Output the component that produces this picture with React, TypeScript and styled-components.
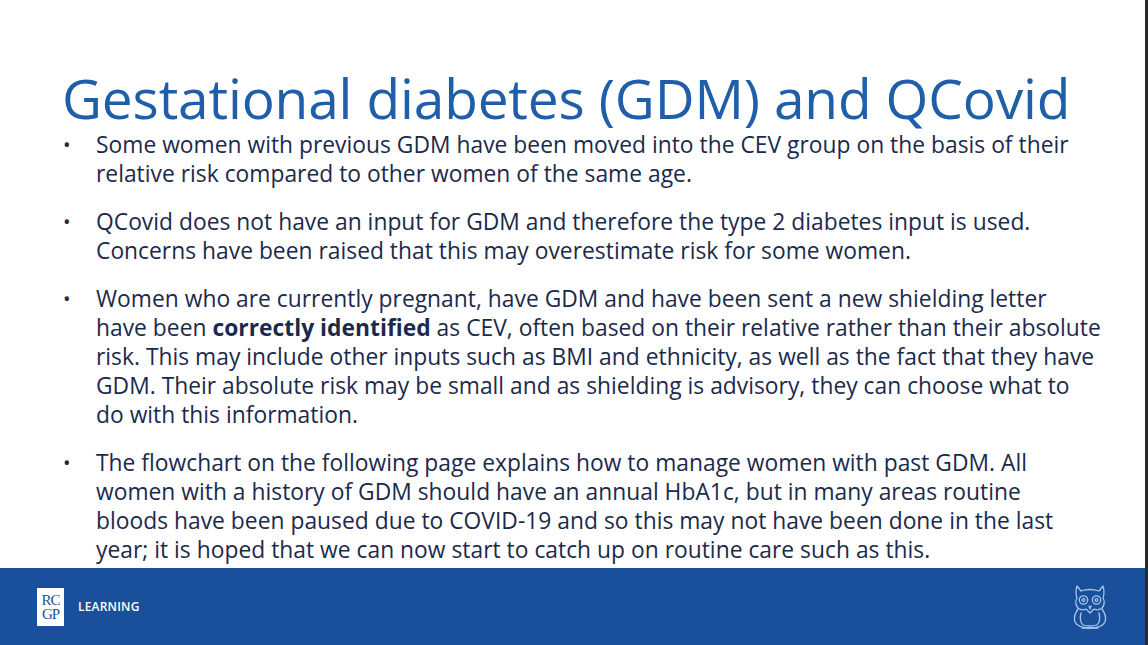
import styled, { createGlobalStyle } from "styled-components";

const GlobalStyle = createGlobalStyle`
  html, body {
    margin: 0;
    padding: 0;
    background: #ffffff;
  }
  body {
    font-family: "Open Sans", "Noto Sans", sans-serif;
  }
`;

const Slide = styled.div`
  width: 1148px;
  height: 645px;
  box-sizing: border-box;
  border-right: 3px solid #2a2a2a;
  display: flex;
  flex-direction: column;
  overflow: hidden;
  background: #ffffff;
`;

const Content = styled.main`
  flex: 1;
  padding: 70px 0 0 62px;
`;

const Title = styled.h1`
  margin: 0;
  font-family: "Open Sans", sans-serif;
  font-weight: 400;
  font-size: 55px;
  line-height: 56px;
  color: #1f5ea8;
  letter-spacing: -0.15px;
  white-space: nowrap;
`;

const BulletList = styled.ul`
  list-style: none;
  margin: 4px 0 0;
  padding: 0;
  display: flex;
  flex-direction: column;
  gap: 19px;
`;

const Bullet = styled.li`
  display: flex;
  color: #1b2a4b;
  font-size: 22.8px;
  line-height: 29px;
  letter-spacing: 0.02px;
  white-space: nowrap;

  &::before {
    content: "•";
    width: 33px;
    flex-shrink: 0;
    padding-left: 1px;
    font-size: 20px;
  }
`;

const Strong = styled.b`
  font-weight: 700;
`;

const Footer = styled.footer`
  height: 77px;
  background: #1a509b;
  display: flex;
  align-items: center;
  justify-content: space-between;
  padding: 0 37px 0 37px;
`;

const Brand = styled.div`
  display: flex;
  align-items: center;
  gap: 14px;
`;

const LogoBox = styled.div`
  width: 27px;
  height: 38px;
  background: #ffffff;
  display: flex;
  flex-direction: column;
  align-items: center;
  justify-content: center;
  font-family: "Liberation Serif", "DejaVu Serif", serif;
  font-size: 15px;
  line-height: 14px;
  color: #1a509b;
  letter-spacing: -1px;
`;

const BrandText = styled.span`
  color: #ffffff;
  font-size: 12px;
  font-weight: 600;
  letter-spacing: 0.2px;
`;

const Owl = () => (
  <svg width="36" height="48" viewBox="0 0 36 48" fill="none" stroke="#a9c4ea" strokeWidth="1.3" strokeLinejoin="round" strokeLinecap="round">
    <path d="M5 3 L9 8 Q18 5 27 8 L31 3 Q33 10 31 15 Q34 20 30 25 Q26 28 22 26 L18 30 L14 26 Q10 28 6 25 Q2 20 5 15 Q3 10 5 3 Z" />
    <circle cx="11.5" cy="17" r="4.2" />
    <circle cx="24.5" cy="17" r="4.2" />
    <circle cx="11.5" cy="17" r="1.4" />
    <circle cx="24.5" cy="17" r="1.4" />
    <path d="M17 23 L18 26 L19 23" />
    <path d="M6 26 Q1 33 3 39 Q6 45 18 45 Q30 45 33 39 Q35 33 30 26" />
    <path d="M9 30 Q7 38 11 42 Q18 44 25 42 Q29 38 27 30" />
    <path d="M10 45 L26 45" />
  </svg>
);

function App() {
  return (
    <>
      <GlobalStyle />
      <Slide>
        <Content>
          <Title>Gestational diabetes (GDM) and QCovid</Title>
          <BulletList>
            <Bullet>
              <span>
                Some women with previous GDM have been moved into the CEV group on the basis of their
                <br />
                relative risk compared to other women of the same age.
              </span>
            </Bullet>
            <Bullet>
              <span>
                QCovid does not have an input for GDM and therefore the type 2 diabetes input is used.
                <br />
                Concerns have been raised that this may overestimate risk for some women.
              </span>
            </Bullet>
            <Bullet>
              <span>
                Women who are currently pregnant, have GDM and have been sent a new shielding letter
                <br />
                have been <Strong>correctly identified</Strong> as CEV, often based on their relative rather than their absolute
                <br />
                risk. This may include other inputs such as BMI and ethnicity, as well as the fact that they have
                <br />
                GDM. Their absolute risk may be small and as shielding is advisory, they can choose what to
                <br />
                do with this information.
              </span>
            </Bullet>
            <Bullet>
              <span>
                The flowchart on the following page explains how to manage women with past GDM. All
                <br />
                women with a history of GDM should have an annual HbA1c, but in many areas routine
                <br />
                bloods have been paused due to COVID-19 and so this may not have been done in the last
                <br />
                year; it is hoped that we can now start to catch up on routine care such as this.
              </span>
            </Bullet>
          </BulletList>
        </Content>
        <Footer>
          <Brand>
            <LogoBox>
              <span>RC</span>
              <span>GP</span>
            </LogoBox>
            <BrandText>LEARNING</BrandText>
          </Brand>
          <Owl />
        </Footer>
      </Slide>
    </>
  );
}

export default App;
